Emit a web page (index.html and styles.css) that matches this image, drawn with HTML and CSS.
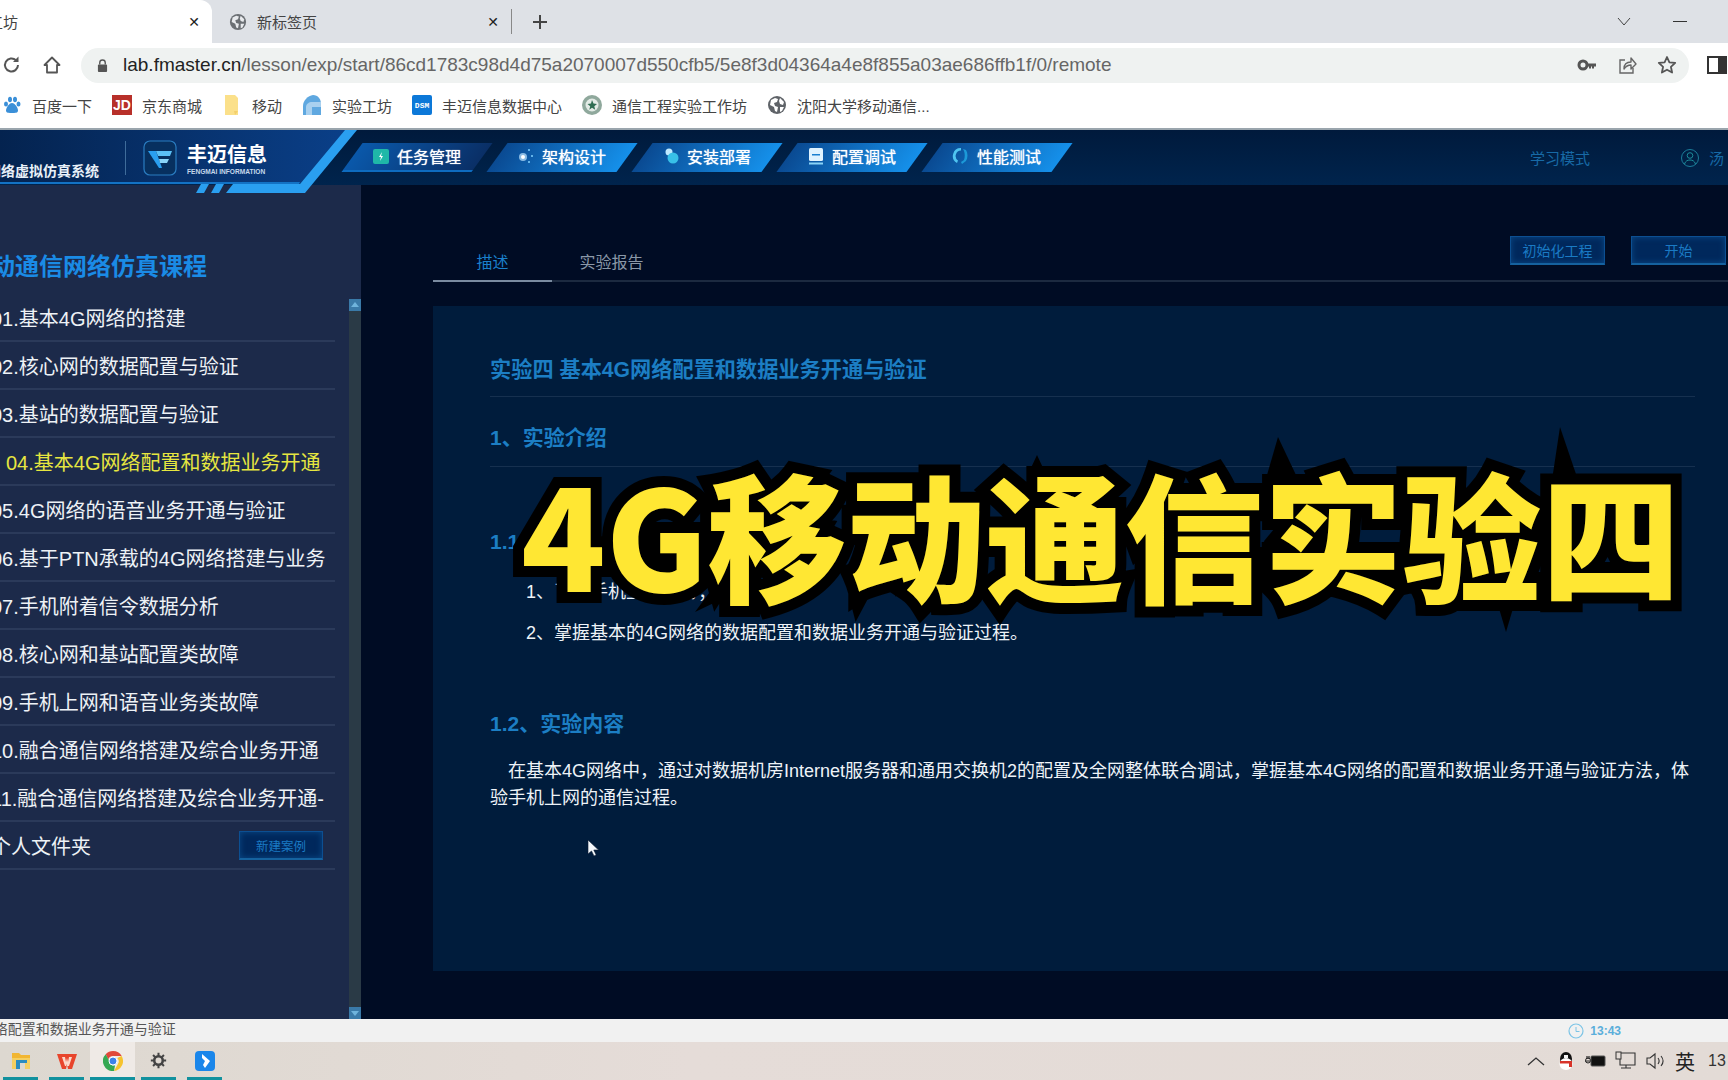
FILE: index.html
```html
<!DOCTYPE html>
<html lang="zh-CN">
<head>
<meta charset="utf-8">
<title>实验工坊</title>
<link rel="stylesheet" href="styles.css">
</head>
<body>
<div class="tabstrip">
  <div class="tab tab-active"><span class="tab-title tab-title-cut">工坊</span><span class="tab-x">✕</span></div>
  <div class="tab tab-idle">
    <svg class="globe" viewBox="0 0 20 20"><circle cx="10" cy="10" r="9" fill="#6b6f74"/><path d="M4 5l4-2 3 1-1 3-3 1 1 3 3 1-1 5-2-1-1-4-4-2zM13 3l4 4-1 3-3-1-1-3zM13 12h4l-2 4-2 1z" fill="#e8eaed"/></svg>
    <span class="tab-title">新标签页</span><span class="tab-x">✕</span>
  </div>
  <span class="tab-sep"></span>
  <svg class="newtab" viewBox="0 0 16 16"><path d="M8 1v14M1 8h14" stroke="#444" stroke-width="2"/></svg>
  <div class="win-ctrl">
    <svg class="chev" viewBox="0 0 14 10"><path d="M1 1l6 7 6-7" fill="none" stroke="#444" stroke-width="1"/></svg>
    <span class="minimize"></span>
  </div>
</div>

<div class="toolbar">
  <svg class="tool-ico reload" viewBox="0 0 20 20"><path d="M16 10a6.500 6.500 0 1 1-2-4.700" fill="none" stroke="#555" stroke-width="2"/><path d="M16.500 1.500v5.500h-5.500z" fill="#555"/></svg>
  <svg class="tool-ico home" viewBox="0 0 20 20"><path d="M10 2.500L2.500 10H5v7.500h10V10h2.500z" fill="none" stroke="#555" stroke-width="1.800" stroke-linejoin="round"/></svg>
  <div class="omnibox">
    <svg class="lock" viewBox="0 0 12 14"><path d="M3 6V4a3 3 0 0 1 6 0v2" fill="none" stroke="#555" stroke-width="1.500"/><rect x="1" y="6" width="10" height="8" rx="1" fill="#555"/></svg>
    <span class="url"><span class="url-host">lab.fmaster.cn</span>/lesson/exp/start/86cd1783c98d4d75a2070007d550cfb5/5e8f3d04364a4e8f855a03ae686ffb1f/0/remote</span>
    <span class="omni-actions">
      <svg class="omni-ico" viewBox="0 0 20 20"><circle cx="6" cy="10" r="4" fill="none" stroke="#555" stroke-width="3"/><path d="M10 8.500h9v3h-2v2h-2v-2h-1v2h-2v-2h-2z" fill="#555"/></svg>
      <svg class="omni-ico" viewBox="0 0 20 20"><path d="M8 5H3v13h13v-5" fill="none" stroke="#666" stroke-width="1.400"/><path d="M7 14c0-5 3-7 7-7V3l5 6-5 5v-4c-3 0-5 1-7 4z" fill="none" stroke="#666" stroke-width="1.400" stroke-linejoin="round"/></svg>
      <svg class="omni-ico" viewBox="0 0 20 20"><path d="M10 2l2.400 5.300 5.800.6-4.300 3.900 1.200 5.700L10 14.700l-5.100 2.800 1.200-5.700L1.800 7.900l5.800-.6z" fill="none" stroke="#555" stroke-width="1.800" stroke-linejoin="round"/></svg>
    </span>
  </div>
  <span class="sidepanel"></span>
</div>

<div class="bookmarks">
  <a class="bm"><svg class="bm-ico" viewBox="0 0 20 20"><ellipse cx="4" cy="9" rx="2" ry="2.600" fill="#3a8fd8"/><ellipse cx="8" cy="4.500" rx="2" ry="2.800" fill="#3a8fd8"/><ellipse cx="13" cy="4.500" rx="2" ry="2.800" fill="#3a8fd8"/><ellipse cx="16.500" cy="9" rx="2" ry="2.600" fill="#3a8fd8"/><path d="M10 8c3 0 6 5 6 7.500S13 18 10 18s-6 0-6-2.500S7 8 10 8z" fill="#3a8fd8"/></svg><span>百度一下</span></a>
  <a class="bm"><span class="jd">JD</span><span>京东商城</span></a>
  <a class="bm"><svg class="bm-ico" viewBox="0 0 20 20"><path d="M3 0h10l3 3v17H3z" fill="#fbe08a"/><path d="M12 16l4 0-3 4z" fill="#f3cf6b"/></svg><span>移动</span></a>
  <a class="bm"><svg class="bm-ico" viewBox="0 0 20 20"><path d="M1 20V11C1 5 6 1 11 0c5 0 8 4 8 9v11z" fill="#5fa8e0"/><path d="M4 20v-8c0-3 3-5 6-5h9v13z" fill="#a8d0ef"/><path d="M10 12h9v8h-9z" fill="#5fa8e0"/></svg><span>实验工坊</span></a>
  <a class="bm"><span class="dsm">DSM</span><span>丰迈信息数据中心</span></a>
  <a class="bm"><svg class="bm-ico" viewBox="0 0 20 20"><circle cx="10" cy="10" r="10" fill="#8fa89c"/><circle cx="10" cy="10" r="6.500" fill="#e3ebe6"/><path d="M10 5l1.500 3.500 3.500.4-2.700 2.300.9 3.600L10 12.800l-2.700 2 .9-3.600L5.500 8.900 9 8.500z" fill="#2f6d52"/></svg><span>通信工程实验工作坊</span></a>
  <a class="bm"><svg class="bm-ico" viewBox="0 0 20 20"><circle cx="10" cy="10" r="9" fill="#5f6368"/><path d="M4 5l4-2 3 1-1 3-3 1 1 3 3 1-1 5-2-1-1-4-4-2zM13 3l4 4-1 3-3-1-1-3zM13 12h4l-2 4-2 1z" fill="#fff"/></svg><span>沈阳大学移动通信...</span></a>
</div>

<div class="app">
  <header class="app-header">
    <svg class="header-decor" viewBox="0 0 360 64" width="360" height="64">
      <defs><linearGradient id="brandfill" x1="0" x2="1" y1="0" y2="0"><stop offset="0" stop-color="#04234f"/><stop offset="1" stop-color="#0a3f88"/></linearGradient></defs>
      <polygon points="0,0 347,0 300,54 0,54" fill="url(#brandfill)"/>
      <polygon points="0,52 300,52 299,54 0,54" fill="#1372c4"/>
      <polygon points="345,0 357,0 305,63 226,63 233,54 300,54" fill="#2a9ff0"/>
      <polygon points="201,54 209,54 204,63 196,63" fill="#2a9ff0"/>
      <polygon points="216,54 224,54 219,63 211,63" fill="#2a9ff0"/>
    </svg>
    <div class="brand">
      <span class="sys-name">网络虚拟仿真系统</span>
      <span class="brand-sep"></span>
      <svg class="brand-logo" viewBox="0 0 34 36"><rect x="1" y="1" width="32" height="34" rx="6" fill="#07305f" stroke="#2a7cc0" stroke-width="1.200"/><path d="M5 11h8l6 17h-3z" fill="#2a9ff0"/><path d="M13 11h16l-2 5H15z" fill="#5bc0f5"/><path d="M16 19h10l-2 4h-7z" fill="#8ad4f7"/></svg>
      <div class="brand-text"><span class="brand-cn">丰迈信息</span><span class="brand-en">FENGMAI INFORMATION</span></div>
    </div>
    <nav class="nav">
      <a class="nav-tab nav-first"><span class="nav-in"><svg class="nav-ico" viewBox="0 0 18 18"><rect x="1" y="2" width="16" height="15" rx="2" fill="#1fb8a8"/><path d="M10 5l-3 5h2l-1 4 3-5H9z" fill="#fff"/></svg><span>任务管理</span></span></a>
      <a class="nav-tab"><span class="nav-in"><svg class="nav-ico" viewBox="0 0 18 18"><circle cx="6" cy="10" r="4" fill="#bfe6ff" opacity=".7"/><circle cx="6" cy="10" r="2" fill="#fff"/><circle cx="12" cy="3" r="1" fill="#7fd0ff"/><circle cx="15" cy="9" r="1" fill="#7fd0ff"/><circle cx="12" cy="15" r="1" fill="#7fd0ff"/></svg><span>架构设计</span></span></a>
      <a class="nav-tab"><span class="nav-in"><svg class="nav-ico" viewBox="0 0 18 18"><circle cx="7" cy="5" r="3.500" fill="#bfe9ff"/><circle cx="11" cy="11" r="5.500" fill="#38c0e8"/></svg><span>安装部署</span></span></a>
      <a class="nav-tab"><span class="nav-in"><svg class="nav-ico" viewBox="0 0 18 18"><rect x="2" y="1" width="14" height="13" rx="1.500" fill="#dff3ff"/><rect x="5" y="7" width="8" height="1.500" fill="#1a80d0"/><rect x="2" y="15.500" width="14" height="2" fill="#8ad4f7"/></svg><span>配置调试</span></span></a>
      <a class="nav-tab"><span class="nav-in"><svg class="nav-ico" viewBox="0 0 18 18"><path d="M9 1a8 8 0 0 0-4 15l1-2.500A5.500 5.500 0 0 1 9 3.500z" fill="#4fc4f0"/><path d="M11 2l3 1c2 3 2 8 0 11l-4 3-1-2 3-2c1-3 1-6 0-9z" fill="#1c9ad8"/></svg><span>性能测试</span></span></a>
    </nav>
    <div class="header-right">
      <span class="mode">学习模式</span>
      <svg class="user-ico" viewBox="0 0 18 20"><circle cx="9" cy="10" r="8.500" fill="none" stroke="#1c7d9a" stroke-width="1"/><circle cx="9" cy="7.500" r="2.800" fill="none" stroke="#1c8d9a" stroke-width="1"/><path d="M3.500 16c1-3 3-4 5.500-4s4.500 1 5.500 4" fill="none" stroke="#1c8d9a" stroke-width="1"/></svg>
      <span class="username">汤</span>
    </div>
  </header>

  <div class="app-body">
    <aside class="sidebar">
      <div class="side-scroll">
        <h2 class="course">移动通信网络仿真课程</h2>
        <ul class="lessons">
          <li class="lesson">01.基本4G网络的搭建</li>
          <li class="lesson">02.核心网的数据配置与验证</li>
          <li class="lesson">03.基站的数据配置与验证</li>
          <li class="lesson lesson-on">04.基本4G网络配置和数据业务开通</li>
          <li class="lesson">05.4G网络的语音业务开通与验证</li>
          <li class="lesson">06.基于PTN承载的4G网络搭建与业务</li>
          <li class="lesson">07.手机附着信令数据分析</li>
          <li class="lesson">08.核心网和基站配置类故障</li>
          <li class="lesson">09.手机上网和语音业务类故障</li>
          <li class="lesson">10.融合通信网络搭建及综合业务开通</li>
          <li class="lesson">11.融合通信网络搭建及综合业务开通-</li>
          <li class="lesson lesson-folder"><span>个人文件夹</span><button class="btn btn-new">新建案例</button></li>
        </ul>
      </div>
      <div class="scrollbar"><span class="sb-btn sb-up"></span><span class="sb-btn sb-down"></span></div>
    </aside>

    <main class="main">
      <div class="main-tabs">
        <a class="mtab mtab-on">描述</a>
        <a class="mtab">实验报告</a>
        <div class="main-actions"><button class="btn">初始化工程</button><button class="btn">开始</button></div>
      </div>
      <article class="doc">
        <h1 class="doc-title">实验四 基本4G网络配置和数据业务开通与验证</h1>
        <h2 class="doc-h2">1、实验介绍</h2>
        <h3 class="doc-h3 doc-h3-a">1.1、实验目的</h3>
        <ol class="doc-list">
          <li>1、了解手机上网业务；</li>
          <li>2、掌握基本的4G网络的数据配置和数据业务开通与验证过程。</li>
        </ol>
        <h3 class="doc-h3 doc-h3-b">1.2、实验内容</h3>
        <p class="doc-p">在基本4G网络中，通过对数据机房Internet服务器和通用交换机2的配置及全网整体联合调试，掌握基本4G网络的配置和数据业务开通与验证方法，体验手机上网的通信过程。</p>
      </article>
    </main>
  </div>
</div>

<div class="statusbar">
  <span class="status-text">基本4G网络配置和数据业务开通与验证</span>
  <span class="status-clock">
    <svg class="clock" viewBox="0 0 16 16"><circle cx="8" cy="8" r="7" fill="none" stroke="#7cc4e6" stroke-width="1.200"/><path d="M8 4v4.500h3.500" fill="none" stroke="#7cc4e6" stroke-width="1"/></svg>
    <span>13:43</span>
  </span>
</div>

<div class="taskbar">
  <div class="task-apps">
    <span class="task"><svg class="task-ico" viewBox="0 0 20 20"><path d="M1 2h7l2 2h9v5H1z" fill="#f2b632"/><path d="M1 7h18v11h-5v-6H7v6H1z" fill="#f4cf62"/><path d="M5 9h11v3H9v6H5z" fill="#2a8cc0"/></svg></span>
    <span class="task"><svg class="task-ico" viewBox="0 0 20 20"><path d="M0 3h20l-5 15h-4l-1-5-1 5H5z" fill="#e8452c"/><path d="M5 6h3l1 5 1-4 1 4 1-5h3l-3 9h-2l-.5-2-.5 2H8z" fill="#fbd7c9"/></svg></span>
    <span class="task task-on"><svg class="task-ico" viewBox="0 0 20 20"><path d="M10 0a10 10 0 0 1 8.700 5H10a5 5 0 0 0-4.800 3.600L2.700 3.200A10 10 0 0 1 10 0z" fill="#e0483a"/><path d="M18.700 5A10 10 0 0 1 11 20l3.600-6.500A5 5 0 0 0 14.300 7z" fill="#f6c32f"/><path d="M11 20A10 10 0 0 1 2.700 3.200L6 9.500a5 5 0 0 0 6 5z" fill="#35a853"/><circle cx="10" cy="10" r="4" fill="#3d82ea" stroke="#fff" stroke-width="1"/></svg></span>
    <span class="task"><svg class="task-ico task-gear" viewBox="0 0 20 20"><circle cx="10" cy="10" r="5" fill="none" stroke="#444" stroke-width="3"/><path d="M10 1v4M10 15v4M1 10h4M15 10h4M3.600 3.600l3 3M13.400 13.400l3 3M3.600 16.400l3-3M13.400 6.600l3-3" stroke="#444" stroke-width="2.400"/></svg></span>
    <span class="task"><svg class="task-ico" viewBox="0 0 20 20"><rect width="20" height="20" rx="4" fill="#1a86ea"/><path d="M7 3l8 7-5 7-2-3 2-4-3-3z" fill="#fff"/></svg></span>
  </div>
  <div class="tray">
    <svg class="tray-chev" viewBox="0 0 18 10"><path d="M1 9l8-7 8 7" fill="none" stroke="#333" stroke-width="1.300"/></svg>
    <svg class="tray-ico" viewBox="0 0 18 20"><ellipse cx="9" cy="8" rx="6" ry="7" fill="#111"/><ellipse cx="9" cy="13" rx="6.500" ry="6" fill="#fff"/><path d="M3 10h12v2.500H3z" fill="#d8342a"/><path d="M12 12h3v4h-3z" fill="#d8342a"/><path d="M7 4h4v3H7z" fill="#f3f3f3"/></svg>
    <svg class="tray-ico" viewBox="0 0 22 16"><rect x="6" y="3" width="14" height="10" rx="1" fill="#111" stroke="#555" stroke-width="1"/><path d="M0 8h5M2 3v3M4 3v3" stroke="#222" stroke-width="1.200"/><circle cx="3" cy="7.500" r="2.500" fill="none" stroke="#222"/></svg>
    <svg class="tray-ico" viewBox="0 0 22 20"><path d="M5 2h15v12H5zM11 14v3M6 17h10" fill="none" stroke="#333" stroke-width="1.100"/><rect x="1" y="1" width="5" height="7" fill="#e4dcd7" stroke="#333" stroke-width="1"/></svg>
    <svg class="tray-ico" viewBox="0 0 22 20"><path d="M2 7h3l5-4v14l-5-4H2z" fill="none" stroke="#333" stroke-width="1.100"/><path d="M13 7c1.500 2 1.500 4 0 6M16 5c2.500 3 2.500 7 0 10" fill="none" stroke="#333" stroke-width="1.100"/></svg>
    <span class="ime">英</span>
    <span class="tray-time">13</span>
  </div>
</div>

<div class="overlay">
  <svg class="spikes" viewBox="0 0 1728 1080" width="1728" height="1080">
    <polygon points="1267,475 1278,437 1296,475" fill="#000"/>
    <polygon points="1552,480 1560,427 1578,480" fill="#000"/>
    <polygon points="1498,605 1506,632 1514,605" fill="#000"/>
    <polygon points="1030,470 1037,455 1044,470" fill="#000"/>
    <polygon points="695,612 715,585 720,600" fill="#000"/>
    <path d="M588 840v14l3.500-3 2.500 5 2.200-1-2.400-5h4.800z" fill="#f4f8fc" stroke="#0a1a30" stroke-width=".6"/>
  </svg>
  <div class="poster">4G移动通信实验四</div>
</div>
</body>
</html>
```

FILE: styles.css
```css
* { box-sizing: border-box; }
html, body { margin: 0; padding: 0; width: 1728px; height: 1080px; overflow: hidden; }
body {
  display: flex;
  flex-direction: column;
  font-family: "Liberation Sans", "Noto Sans CJK SC", sans-serif;
  background: #fff;
  position: relative;
}
ul, ol { list-style: none; margin: 0; padding: 0; }
h1, h2, h3, p { margin: 0; }

/* Browser chrome */
.tabstrip { height: 43px; flex: none; background: #dee1e6; display: flex; align-items: center; position: relative; }
.tab { height: 43px; display: flex; align-items: center; font-size: 14px; color: #444; }
.tab-active { width: 212px; background: #fff; border-top-right-radius: 12px; padding-right: 12px; }
.tab-idle { width: 294px; padding: 0 7px 0 17px; gap: 10px; }
.tab-title { flex: 1; font-size: 15px; }
.tab-title-cut { margin-left: -12px; }
.tab-x { font-size: 14px; color: #222; font-weight: 700; font-family: "DejaVu Sans", sans-serif; }
.globe { width: 18px; height: 18px; flex: none; }
.tab-sep { width: 1px; height: 25px; background: #888; margin-left: 5px; }
.newtab { width: 16px; height: 16px; margin-left: 20px; }
.win-ctrl { margin-left: auto; display: flex; align-items: center; gap: 42px; padding-right: 41px; }
.chev { width: 14px; height: 10px; }
.minimize { width: 14px; height: 1px; background: #333; }

.toolbar { height: 47px; flex: none; background: #fff; display: flex; align-items: center; padding-left: 2px; padding-bottom: 3px; }
.tool-ico { width: 20px; height: 20px; flex: none; }
.home { margin-left: 20px; }
.omnibox { margin-left: 19px; width: 1608px; height: 35px; border-radius: 18px; background: #eff2f1; display: flex; align-items: center; padding: 0 12px 0 16px; }
.lock { width: 11px; height: 13px; flex: none; }
.url { margin-left: 15px; font-size: 19px; color: #666; white-space: nowrap; }
.url-host { color: #222; }
.omni-actions { margin-left: auto; display: flex; gap: 20px; }
.omni-ico { width: 20px; height: 20px; }
.sidepanel { margin-left: 18px; width: 20px; height: 18px; flex: none; border: 2px solid #333; border-right-width: 9px; }

.bookmarks { height: 38px; flex: none; background: #fff; display: flex; align-items: center; gap: 20px; padding: 0 0 8px 2px; }
.bm { display: flex; align-items: center; gap: 10px; font-size: 15px; color: #444; }
.bm-ico { width: 20px; height: 20px; flex: none; }
.jd, .dsm { width: 20px; height: 20px; flex: none; display: flex; align-items: center; justify-content: center; color: #fff; }
.jd { background: #b8302a; font-size: 14px; font-weight: 700; }
.dsm { background: #0c78d8; font-size: 8px; font-weight: 700; border-radius: 2px; font-family: "Liberation Mono", monospace; }

/* App */
.app { height: 891px; flex: none; display: flex; flex-direction: column; border-top: 2px solid #9aa5ad; background: #000c24; }
.app-header { height: 55px; flex: none; display: flex; align-items: center; position: relative; z-index: 2; background: linear-gradient(#001a3c, #00244d); }
.header-decor { position: absolute; left: 0; top: 0; overflow: visible; }
.brand { width: 352px; flex: none; display: flex; align-items: center; position: relative; height: 55px; }
.sys-name { margin-left: -13px; font-size: 14px; font-weight: 700; color: #e8f0f8; padding-top: 24px; white-space: nowrap; }
.brand-sep { width: 1px; height: 34px; background: #3f6c9a; margin-left: 26px; }
.brand-logo { width: 34px; height: 36px; margin-left: 17px; flex: none; }
.brand-text { margin-left: 10px; display: flex; flex-direction: column; color: #fff; padding-top: 4px; }
.brand-cn { font-size: 20px; font-weight: 700; line-height: 24px; letter-spacing: 0; }
.brand-en { font-size: 6.6px; line-height: 9px; font-weight: 700; color: #c5d8ea; white-space: nowrap; }

.nav { display: flex; gap: 15px; }
.nav-tab { width: 130px; height: 29px; transform: skewX(-36deg); background: linear-gradient(to right, #0a4a92, #1590ea); display: flex; align-items: center; justify-content: center; }
.nav-first { background: linear-gradient(to right, #0a58aa, #0a2f66); box-shadow: inset 0 -2px 0 #0e6cc0; }
.nav-in { transform: skewX(36deg); display: flex; align-items: center; gap: 7px; color: #fff; font-size: 16px; white-space: nowrap; padding-bottom: 3px; text-shadow: 0 0 1px #fff; }
.nav-ico { width: 18px; height: 18px; flex: none; }

.header-right { margin-left: auto; display: flex; align-items: center; color: #176aa6; width: 198px; flex: none; }
.mode { font-size: 15px; }
.user-ico { width: 18px; height: 20px; margin-left: 91px; flex: none; }
.username { margin-left: 10px; font-size: 15px; white-space: nowrap; }

.app-body { flex: 1; display: flex; min-height: 0; }
.sidebar { width: 361px; flex: none; background: #1c2a4a; display: flex; position: relative; }
.side-scroll { flex: 1; min-width: 0; overflow: hidden; padding: 0 14px 0 0; }
.course { margin: 67px 0 0 -33px; font-size: 24px; line-height: 30px; font-weight: 700; color: #1a8be6; white-space: nowrap; height: 42px; }
.lessons { display: flex; flex-direction: column; }
.lesson { height: 48px; margin-left: -9px; border-bottom: 2px solid #2b3a5a; font-size: 20px; color: #eef2f6; display: flex; align-items: center; white-space: nowrap; padding-top: 1px; }
.lesson-on { color: #e6e640; padding-left: 15px; }
.lesson-folder { justify-content: space-between; padding-right: 12px; }
.scrollbar { width: 12px; flex: none; margin-top: 114px; background: #2a3a46; display: flex; flex-direction: column; justify-content: space-between; }
.sb-btn { height: 12px; background: #3a7aa8; position: relative; display: block; }
.sb-up::after, .sb-down::after { content: ""; position: absolute; left: 2px; width: 0; height: 0; border-left: 4px solid transparent; border-right: 4px solid transparent; }
.sb-up::after { top: 3px; border-bottom: 5px solid #6fb4dc; }
.sb-down::after { top: 4px; border-top: 5px solid #6fb4dc; }

.btn { width: 95px; height: 29px; padding: 0; background: #00285c; border: 1px solid #0c4f92; border-bottom: 2px solid #15629f; color: #1a7ac4; font-size: 14px; font-family: inherit; box-shadow: inset 0 0 6px #0a4a88; }
.btn-new { width: 84px; font-size: 12.5px; }

.main { flex: 1; min-width: 0; background: #000c24; display: flex; flex-direction: column; padding-left: 72px; }
.main-tabs { height: 97px; flex: none; display: flex; align-items: flex-end; border-bottom: 2px solid #1c2a40; position: relative; }
.mtab { width: 119px; height: 40px; padding-top: 11px; text-align: center; font-size: 16px; line-height: 24px; color: #8a98a8; }
.mtab-on { color: #1a80cc; border-bottom: 2px solid #7a8ba0; margin-bottom: -2px; height: 42px; }
.main-actions { margin-left: auto; align-self: flex-end; display: flex; gap: 26px; padding-right: 2px; margin-bottom: 15px; }
.doc { margin-top: 24px; height: 665px; background: #001c3c; padding: 50px 33px 0 57px; }
.doc-title { font-size: 21.2px; line-height: 28px; font-weight: 700; color: #1c7ec4; padding-bottom: 12px; border-bottom: 1px solid #16304f; }
.doc-h2 { margin-top: 27px; font-size: 21px; line-height: 28px; font-weight: 700; color: #1c7ec4; padding-bottom: 14px; border-bottom: 1px solid #16304f; }
.doc-h3 { font-size: 21px; line-height: 28px; font-weight: 700; color: #1c7ec4; }
.doc-h3-a { margin-top: 61px; }
.doc-h3-b { margin-top: 56px; }
.doc-list { margin-top: 16px; padding-left: 36px; font-size: 18px; line-height: 41px; color: #eef3f8; }
.doc-p { margin-top: 20px; font-size: 18px; line-height: 27px; color: #eef3f8; text-indent: 18px; }

.statusbar { height: 23px; flex: none; background: #f1f1f1; display: flex; align-items: center; font-size: 14px; color: #555; overflow: hidden; padding-bottom: 5px; }
.status-text { margin-left: -67px; white-space: nowrap; }
.status-clock { margin-left: auto; margin-right: 107px; padding-top: 5px; display: flex; align-items: center; gap: 6px; color: #5aaedb; font-size: 12px; font-weight: 700; }
.clock { width: 16px; height: 16px; }

.taskbar { height: 38px; flex: none; background: linear-gradient(to right, #ddd8d0, #e5dcd8 40%, #e3dbd6); display: flex; align-items: center; justify-content: space-between; }
.task-apps { display: flex; gap: 11px; padding-left: 3px; height: 38px; }
.task { width: 35px; height: 38px; display: flex; align-items: center; justify-content: center; border-bottom: 3px solid #11919e; padding-top: 2px; }
.task-on { width: 45px; margin: 0 -5px; background: #efeae6; }
.task-ico { width: 20px; height: 20px; }
.task-gear { width: 17px; height: 17px; }
.tray { display: flex; align-items: center; width: 201px; padding-right: 0; white-space: nowrap; overflow: hidden; }
.tray-chev { width: 18px; height: 10px; margin-right: 2px; flex: none; }
.tray-ico { width: 22px; height: 20px; margin-left: 8px; flex: none; }
.ime { margin-left: 8px; font-size: 20px; color: #222; }
.tray-time { margin-left: 13px; font-size: 16px; color: #333; }

/* Overlaid video caption */
.overlay { position: absolute; left: 0; top: 0; width: 1728px; height: 1080px; pointer-events: none; z-index: 5; overflow: hidden; }
.spikes { position: absolute; left: 0; top: 0; }
.poster {
  position: absolute;
  left: 521px;
  top: 437px;
  font-family: "Noto Sans CJK SC", sans-serif;
  font-weight: 900;
  font-size: 139px;
  line-height: 190px;
  color: #ffe733;
  white-space: nowrap;
  -webkit-text-stroke: 22px #000;
  paint-order: stroke fill;
  text-shadow: 4px 5px 0 #000;
}
```
